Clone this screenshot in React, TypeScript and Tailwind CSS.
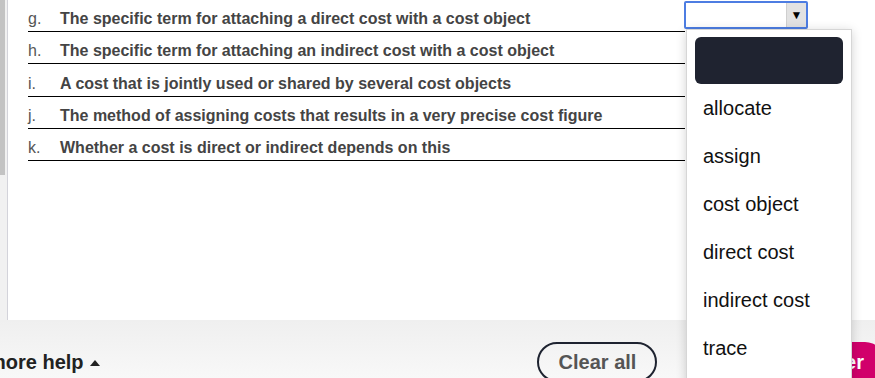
import React from 'react';

const rows = [
  { letter: 'g.', text: 'The specific term for attaching a direct cost with a cost object' },
  { letter: 'h.', text: 'The specific term for attaching an indirect cost with a cost object' },
  { letter: 'i.', text: 'A cost that is jointly used or shared by several cost objects' },
  { letter: 'j.', text: 'The method of assigning costs that results in a very precise cost figure' },
  { letter: 'k.', text: 'Whether a cost is direct or indirect depends on this' },
];

const options = ['allocate', 'assign', 'cost object', 'direct cost', 'indirect cost', 'trace'];

export default function App() {
  return (
    <div
      className="relative w-[875px] h-[378px] overflow-hidden bg-white"
      style={{ fontFamily: '"Liberation Sans", Arial, sans-serif' }}
    >
      {/* question panel */}
      <div className="flex h-[320px]">
        <div className="w-[7px] bg-[#f1f1f1]">
          <div className="w-[5px] h-[175px] bg-[#c3c3c3]" />
        </div>
        <div className="flex-1 border-l border-[#d3d3da] pl-[20px]">
          <div className="w-[657px]">
            {rows.map((r, i) => (
              <div
                key={r.letter}
                className={`flex items-end border-b border-black pb-[3px] ${i === 0 ? 'h-[32px]' : 'h-[32.3px]'}`}
              >
                <span className="w-[32px] text-[16px] leading-[18px] text-[#555]">{r.letter}</span>
                <span className="text-[16px] leading-[18px] font-bold text-[#444]">{r.text}</span>
              </div>
            ))}
          </div>
        </div>
      </div>

      {/* footer */}
      <div className="flex items-start h-[58px] pt-[22px] bg-gradient-to-b from-[#efefef] to-[#f8f8f8]">
        <div className="ml-[-12px] mt-[8px] flex items-center gap-[6px] text-[20px] leading-[24px] font-bold text-[#222]">
          <span>more help</span>
          <svg width="10" height="6" viewBox="0 0 10 6" className="mt-[2px]">
            <path d="M0 6 L5 0 L10 6 Z" fill="#222" />
          </svg>
        </div>
        <button className="ml-auto shrink-0 h-[40px] w-[120px] rounded-full border-2 border-[#1e2330] text-[20px] font-bold text-[#555]">
          Clear all
        </button>
        <button className="ml-[60px] mr-[-10px] shrink-0 h-[40px] rounded-full bg-[#d1006b] pl-[12px] pr-[21px] text-[20px] font-bold text-white whitespace-nowrap">
          Check answer
        </button>
      </div>

      {/* select for row g */}
      <div className="absolute left-[684px] top-[1px] w-[124px] h-[28px] rounded-[2px] border-2 border-[#4d7de2] bg-white flex justify-end">
        <div className="w-[20px] h-full bg-[#e2e2e2] border-l border-[#cfcfcf] flex items-center justify-center text-[12px] leading-none text-black">
          ▼
        </div>
      </div>

      {/* open option list */}
      <div className="absolute left-[686px] top-[29px] w-[166px] h-[360px] bg-white border border-[#d6d6d6] shadow-[0_2px_10px_rgba(0,0,0,0.18)]">
        <div className="mx-[8px] mt-[7px] h-[47px] rounded-[6px] bg-[#1f2330]" />
        {options.map((o) => (
          <div key={o} className="h-[48px] flex items-center pl-[16px] text-[20px] text-[#111]">
            {o}
          </div>
        ))}
      </div>
    </div>
  );
}
